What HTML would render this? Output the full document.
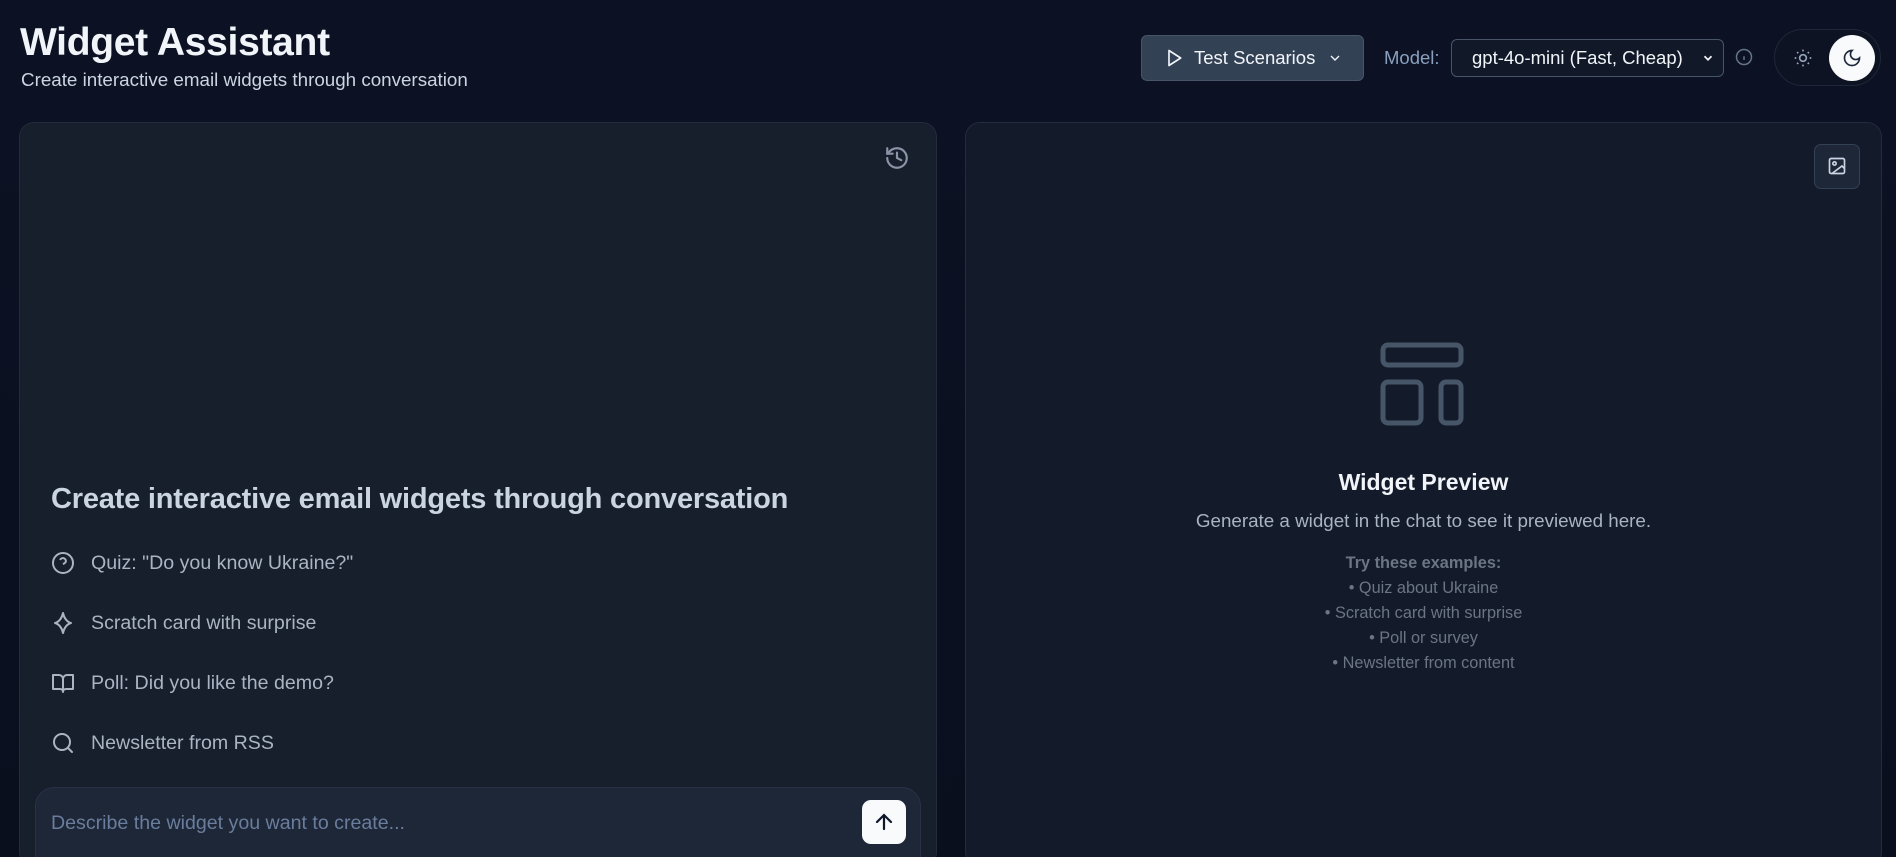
<!DOCTYPE html>
<html style="width:1896px;height:857px;overflow:hidden"><head><meta charset="utf-8"><style>
*{box-sizing:border-box;margin:0;padding:0}
body{width:1896px;height:857px;overflow:hidden;background:linear-gradient(180deg,#0c1224 0%,#0a0f1e 100%);font-family:"Liberation Sans",sans-serif;position:relative;color:#e2e8f0}
.abs{position:absolute}
.title{left:20px;top:21px;font-size:39px;font-weight:bold;color:#f1f5f9;letter-spacing:-0.3px}
.sub{left:21px;top:69px;font-size:18.8px;color:#cbd5e1}
.panel{top:122px;height:745px;background:#171e2c;border:1px solid #232c3c;border-radius:15px}
.btn{left:1141px;top:35px;width:223px;height:46px;background:#334155;border:1px solid #475569;border-radius:6px;display:flex;align-items:center;padding-left:22px;font-size:18.5px;color:#f1f5f9}
.sel{left:1451px;top:39px;width:273px;height:38px;background:#111827;border:1px solid #475569;border-radius:6px;font-size:18.5px;color:#f1f5f9;display:flex;align-items:center;padding-left:20px}
.item{left:51px;font-size:19.6px;color:#aab4c3;display:flex;align-items:center}
.item svg{margin-right:16px}
.ex{left:965px;width:917px;text-align:center;font-size:16.3px;color:#6b7585}
</style></head><body>
<div class="abs title">Widget Assistant</div>
<div class="abs sub">Create interactive email widgets through conversation</div>

<div class="abs btn"><svg width="20" height="20" viewBox="0 0 24 24" fill="none" stroke="#f1f5f9" stroke-width="2" stroke-linejoin="round"><path d="M6 3l14 9-14 9z"/></svg><span style="margin-left:10px">Test Scenarios</span><svg style="margin-left:12px" width="16" height="16" viewBox="0 0 24 24" fill="none" stroke="#f1f5f9" stroke-width="2"><path d="M6 9l6 6 6-6"/></svg></div>
<div class="abs" style="left:1384px;top:47px;font-size:18.5px;color:#8aa0bf">Model:</div>
<div class="abs sel">gpt-4o-mini (Fast, Cheap)<svg style="position:absolute;right:8px" width="14" height="14" viewBox="0 0 24 24" fill="none" stroke="#f1f5f9" stroke-width="3"><path d="M6 9l6 6 6-6"/></svg></div>
<svg class="abs" style="left:1735px;top:48px" width="18" height="18" viewBox="0 0 24 24" fill="none" stroke="#64748b" stroke-width="2"><circle cx="12" cy="12" r="10"/><path d="M12 16v-5M12 8h0"/></svg>
<div class="abs" style="left:1774px;top:29px;width:107px;height:57px;border-radius:29px;background:#0d1322;border:1px solid #1f2838"></div>
<svg class="abs" style="left:1793px;top:48px" width="20" height="20" viewBox="0 0 24 24" fill="none" stroke="#94a3b8" stroke-width="2"><circle cx="12" cy="12" r="4"/><path d="M12 2v2M12 20v2M4.9 4.9l1.4 1.4M17.7 17.7l1.4 1.4M2 12h2M20 12h2M4.9 19.1l1.4-1.4M17.7 6.3l1.4-1.4"/></svg>
<div class="abs" style="left:1829px;top:35px;width:46px;height:46px;border-radius:50%;background:#f8fafc"></div>
<svg class="abs" style="left:1842px;top:48px" width="20" height="20" viewBox="0 0 24 24" fill="none" stroke="#1e293b" stroke-width="2"><path d="M12 3a6 6 0 0 0 9 9 9 9 0 1 1-9-9z"/></svg>

<div class="abs panel" style="left:19px;width:918px"></div>
<div class="abs panel" style="left:965px;width:917px;background:#131a29"></div>

<svg class="abs" style="left:884px;top:145px" width="26" height="26" viewBox="0 0 24 24" fill="none" stroke="#8a94a6" stroke-width="2" stroke-linecap="round"><path d="M3 12a9 9 0 1 0 9-9 9.75 9.75 0 0 0-6.74 2.74L3 8"/><path d="M3 3v5h5"/><path d="M12 7v5l4 2"/></svg>

<div class="abs" style="left:51px;top:483px;font-size:29px;font-weight:bold;color:#cbd5e1;letter-spacing:-0.2px">Create interactive email widgets through conversation</div>
<div class="abs item" style="top:551px"><svg width="24" height="24" viewBox="0 0 24 24" fill="none" stroke="#aab4c3" stroke-width="2"><circle cx="12" cy="12" r="10"/><path d="M9.1 9a3 3 0 0 1 5.8 1c0 2-3 3-3 3M12 17h0"/></svg>Quiz: "Do you know Ukraine?"</div>
<div class="abs item" style="top:611px"><svg width="24" height="24" viewBox="0 0 24 24" fill="none" stroke="#aab4c3" stroke-width="2" stroke-linejoin="round"><path d="M12 2c1 5 4 9 8 10-4 1-7 5-8 10-1-5-4-9-8-10 4-1 7-5 8-10z"/></svg>Scratch card with surprise</div>
<div class="abs item" style="top:671px"><svg width="24" height="24" viewBox="0 0 24 24" fill="none" stroke="#aab4c3" stroke-width="2" stroke-linejoin="round"><path d="M2 4h6a4 4 0 0 1 4 4v13a3 3 0 0 0-3-3H2zM22 4h-6a4 4 0 0 0-4 4v13a3 3 0 0 1 3-3h7z"/></svg>Poll: Did you like the demo?</div>
<div class="abs item" style="top:731px"><svg width="24" height="24" viewBox="0 0 24 24" fill="none" stroke="#aab4c3" stroke-width="2" stroke-linecap="round"><circle cx="11" cy="11" r="8"/><path d="M21 21l-4.3-4.3"/></svg>Newsletter from RSS</div>

<div class="abs" style="left:35px;top:787px;width:886px;height:90px;border-radius:19px;background:#1e2738;border:1px solid #283246"></div>
<div class="abs" style="left:51px;top:812px;font-size:19.6px;color:#6a7d9c">Describe the widget you want to create...</div>
<div class="abs" style="left:862px;top:800px;width:44px;height:44px;border-radius:9px;background:#f8fafc"></div>
<svg class="abs" style="left:872px;top:810px" width="24" height="24" viewBox="0 0 24 24" fill="none" stroke="#0f172a" stroke-width="2.2" stroke-linecap="round"><path d="M12 19V5M5 12l7-7 7 7"/></svg>

<div class="abs" style="left:1814px;top:144px;width:46px;height:45px;border-radius:7px;background:#1e2738;border:1px solid #334155"></div>
<svg class="abs" style="left:1827px;top:156px" width="20" height="20" viewBox="0 0 24 24" fill="none" stroke="#cbd5e1" stroke-width="2"><rect x="3" y="3" width="18" height="18" rx="2"/><circle cx="9" cy="9" r="2"/><path d="M21 15l-3-3L6 21"/></svg>

<svg class="abs" style="left:1380px;top:342px" width="84" height="84" viewBox="0 0 84 84" fill="none" stroke="#475569" stroke-width="5"><rect x="3" y="3" width="78" height="20" rx="5"/><rect x="3" y="40" width="38" height="41" rx="5"/><rect x="61" y="40" width="20" height="41" rx="5"/></svg>
<div class="abs" style="left:965px;width:917px;top:469px;text-align:center;font-size:23px;font-weight:bold;color:#f1f5f9">Widget Preview</div>
<div class="abs" style="left:965px;width:917px;top:510px;text-align:center;font-size:18.8px;color:#a8b3c3">Generate a widget in the chat to see it previewed here.</div>
<div class="abs ex" style="top:554px;font-weight:bold">Try these examples:</div>
<div class="abs ex" style="top:579px">• Quiz about Ukraine</div>
<div class="abs ex" style="top:604px">• Scratch card with surprise</div>
<div class="abs ex" style="top:629px">• Poll or survey</div>
<div class="abs ex" style="top:654px">• Newsletter from content</div>
</body></html>
